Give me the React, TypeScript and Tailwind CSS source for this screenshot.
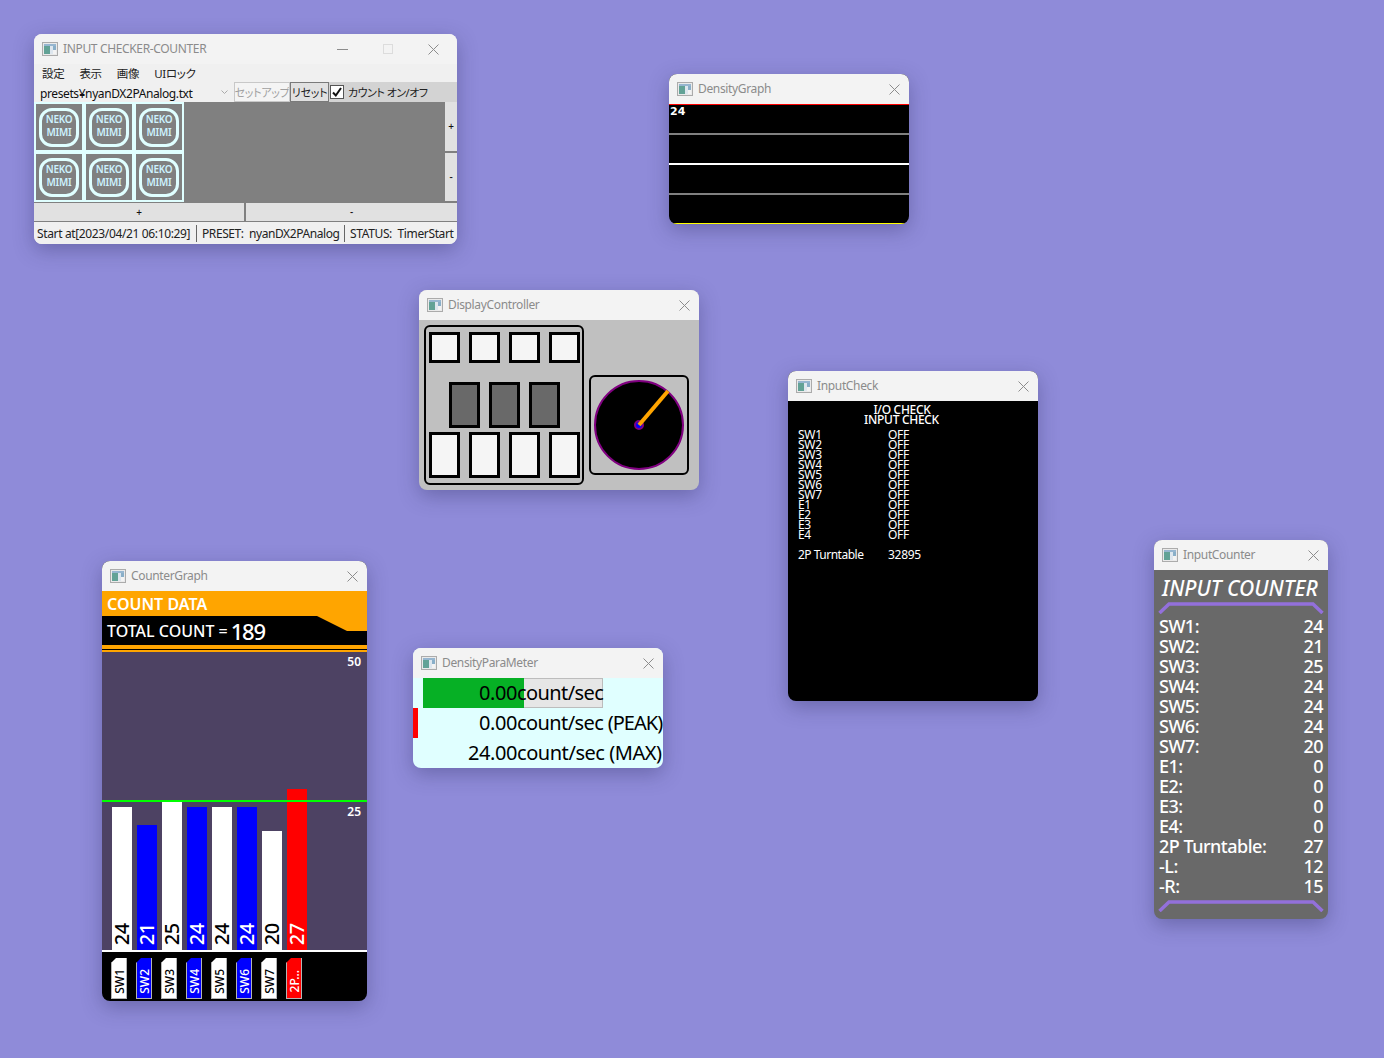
import type { ReactNode } from 'react';

const ui = 'font-["Noto_Sans","Noto_Sans_CJK_JP",sans-serif] tracking-[-0.3px]';

function AppIcon() {
    return (
        <svg width="16" height="14" viewBox="0 0 16 14" className="shrink-0 opacity-80">
            <rect x="0.5" y="0.5" width="15" height="13" fill="#e8e8e8" stroke="#9a9a9a" />
            <rect x="2" y="2" width="12" height="2" fill="#7fa8c8" />
            <rect x="2" y="4" width="6" height="8" fill="#3f8f7f" />
            <rect x="8" y="4" width="3" height="8" fill="#d8e4ee" />
            <rect x="11" y="4" width="3" height="4" fill="#6f9fbf" />
            <rect x="11" y="8" width="3" height="4" fill="#f4f4f4" />
        </svg>
    );
}

function CloseIcon() {
    return (
        <svg width="11" height="11" viewBox="0 0 11 11" className="shrink-0">
            <path d="M0.5 0.5 L10.5 10.5 M10.5 0.5 L0.5 10.5" stroke="#8c8c8c" strokeWidth="1" fill="none" />
        </svg>
    );
}

function TitleBar({ title, full }: { title: string; full?: boolean }) {
    return (
        <div className={`h-[30px] shrink-0 bg-[#f3f3f3] flex items-center pl-2 ${full ? 'pr-[18px]' : 'pr-[9px]'}`}>
            <AppIcon />
            <span className="ml-[5px] text-[12px] tracking-[-0.35px] text-[#8b8b8b] whitespace-nowrap">{title}</span>
            <div className="flex-1" />
            {full && (
                <>
                    <div className="w-[11px] h-px bg-[#8c8c8c] mr-[35px]" />
                    <div className="w-[10px] h-[10px] border border-[#dcdcdc] mr-[35px]" />
                </>
            )}
            <CloseIcon />
        </div>
    );
}

function Win({ className, title, full, children }: { className: string; title: string; full?: boolean; children: ReactNode }) {
    return (
        <div className={`absolute flex flex-col rounded-[8px] overflow-hidden shadow-[0_6px_20px_rgba(40,40,90,0.35)] ${ui} ${className}`}>
            <TitleBar title={title} full={full} />
            {children}
        </div>
    );
}

function Neko() {
    return (
        <div className="w-[46px] h-[46px] bg-[#808080] flex items-center justify-center">
            <div className="w-[40px] h-[39px] rounded-[13px] border-[3px] border-[#e0ffff] flex flex-col items-center justify-center text-[10px] leading-[13px] font-semibold text-[#cdf2ff] pb-[2px]">
                <span>NEKO</span>
                <span>MIMI</span>
            </div>
        </div>
    );
}

function InputCheckerCounter() {
    return (
        <Win className="left-[34px] top-[34px] w-[423px] h-[210px] bg-[#f0f0f0]" title="INPUT CHECKER-COUNTER" full>
            <div className="h-[18px] flex items-center gap-[15px] pl-2 pt-px text-[11.5px] text-[#222] [font-feature-settings:'palt']">
                <span>設定</span>
                <span>表示</span>
                <span>画像</span>
                <span>UIロック</span>
            </div>
            <div className="h-[20px] flex items-stretch bg-[#d3d3d3] text-[12px] leading-none">
                <div className="w-[200px] bg-[#f0f0f0] flex items-center pl-[6px] pr-[6px] overflow-hidden">
                    <span className="flex-1 text-[#111] tracking-[-0.4px] whitespace-nowrap translate-y-[2px]">presets¥nyanDX2PAnalog.txt</span>
                    <svg width="7" height="5" viewBox="0 0 7 5"><path d="M0.5 0.5 L3.5 3.5 L6.5 0.5" stroke="#aaa" fill="none" /></svg>
                </div>
                <div className="w-[56px] bg-[#f4f4f4] border border-[#c8c8c8] text-[11px] text-[#a0a0a0] flex items-center justify-center whitespace-nowrap overflow-hidden [font-feature-settings:'palt']">セットアップ</div>
                <div className="w-[39px] bg-[#e1e1e1] border border-[#7a7a7a] text-[11px] text-[#222] flex items-center justify-center whitespace-nowrap overflow-hidden [font-feature-settings:'palt']">リセット</div>
                <div className="ml-px flex items-center">
                    <div className="w-[14px] h-[14px] bg-white border border-[#555] flex items-center justify-center">
                        <svg width="12" height="12" viewBox="0 0 12 12"><path d="M2 6.5 L4.8 9.5 L10 2" stroke="#111" strokeWidth="2" fill="none" /></svg>
                    </div>
                    <span className="ml-[4px] text-[11px] tracking-[-0.5px] text-[#222] whitespace-nowrap [font-feature-settings:'palt']">カウント オン/オフ</span>
                </div>
            </div>
            <div className="h-[100px] flex bg-[#808080]">
                <div className="w-[150px] bg-[#e0ffff] grid grid-cols-3 gap-x-1 gap-y-1 pl-[2px] pt-[2px] pb-[2px] pr-[2px]">
                    {[0, 1, 2, 3, 4, 5].map((i) => (
                        <Neko key={i} />
                    ))}
                </div>
                <div className="flex-1" />
                <div className="w-[12px] flex flex-col gap-[2px] text-[10px] font-medium text-[#111]">
                    <div className="h-[49px] bg-[#e1e1e1] flex items-center justify-center">+</div>
                    <div className="h-[48px] bg-[#e1e1e1] flex items-center justify-center">-</div>
                </div>
            </div>
            <div className="h-[20px] py-px flex gap-[2px] bg-[#808080] text-[10px] font-medium text-[#111]">
                <div className="w-[210px] bg-[#e1e1e1] flex items-center justify-center">+</div>
                <div className="flex-1 bg-[#e1e1e1] flex items-center justify-center">-</div>
            </div>
            <div className="flex-1 flex items-center bg-[#f0f0f0] pl-[3px] pt-px text-[12px] tracking-[-0.36px] text-[#222] whitespace-nowrap">
                <span className="w-[159px] shrink-0">Start at[2023/04/21 06:10:29]</span>
                <div className="w-px h-[17px] bg-[#666] shrink-0" />
                <span className="w-[147px] shrink-0 pl-[5px] tracking-[-0.42px]">PRESET:&nbsp; nyanDX2PAnalog</span>
                <div className="w-px h-[17px] bg-[#666] shrink-0" />
                <span className="pl-[5px]">STATUS:&nbsp; TimerStart</span>
            </div>
        </Win>
    );
}

function DensityGraph() {
    return (
        <Win className="left-[669px] top-[74px] w-[240px] h-[150px] bg-black" title="DensityGraph">
            <div className="h-px bg-[#ff0000]" />
            <div className="flex-1 flex flex-col">
                <div className="h-[28px] pl-px font-['DejaVu_Sans'] font-bold text-[11px] tracking-normal leading-[13px] text-white">24</div>
                <div className="h-[2px] bg-[#808080]" />
                <div className="h-[28px]" />
                <div className="h-[2px] bg-white" />
                <div className="h-[28px]" />
                <div className="h-[2px] bg-[#808080]" />
                <div className="flex-1" />
                <div className="h-px bg-[#ffff00]" />
            </div>
        </Win>
    );
}

function DisplayController() {
    const sq = 'w-[31px] border-[3px] border-black';
    return (
        <Win className="left-[419px] top-[290px] w-[280px] h-[200px] bg-[#c0c0c0]" title="DisplayController">
            <div className="flex items-end pl-[5px] pt-[5px]">
                <div className="w-[160px] h-[160px] rounded-[6px] border-2 border-black flex flex-col">
                    <div className="flex gap-[9px] pl-[3px] pt-[5px]">
                        {[0, 1, 2, 3].map((i) => (
                            <div key={i} className={`${sq} h-[31px] bg-[#f5f5f5]`} />
                        ))}
                    </div>
                    <div className="flex gap-[9px] pl-[23px] pt-[19px]">
                        {[0, 1, 2].map((i) => (
                            <div key={i} className={`${sq} h-[46px] bg-[#696969]`} />
                        ))}
                    </div>
                    <div className="flex gap-[9px] pl-[3px] pt-[4px]">
                        {[0, 1, 2, 3].map((i) => (
                            <div key={i} className={`${sq} h-[46px] bg-[#f5f5f5]`} />
                        ))}
                    </div>
                </div>
                <div className="ml-[5px] mb-[10px] w-[100px] h-[100px] rounded-[6px] border-2 border-black flex items-center justify-center">
                    <svg width="90" height="90" viewBox="0 0 90 90">
                        <circle cx="45" cy="45" r="44" fill="#000" stroke="#800080" strokeWidth="2" />
                        <circle cx="45" cy="45" r="4" fill="#0000ff" stroke="#800080" strokeWidth="2" />
                        <line x1="45" y1="45" x2="74" y2="11" stroke="#ffa500" strokeWidth="4" />
                    </svg>
                </div>
            </div>
        </Win>
    );
}

const checkRows = ['SW1', 'SW2', 'SW3', 'SW4', 'SW5', 'SW6', 'SW7', 'E1', 'E2', 'E3', 'E4'];

function InputCheck() {
    return (
        <Win className="left-[788px] top-[371px] w-[250px] h-[330px] bg-black" title="InputCheck">
            <div className="pt-[4px] text-white text-[12px] leading-[10px]">
                <div className="w-[228px] text-center font-medium">I/O CHECK</div>
                <div className="w-[227px] text-center font-medium">INPUT CHECK</div>
                <div className="mt-[5px] pl-[10px]">
                    {checkRows.map((r) => (
                        <div key={r} className="flex h-[10px]">
                            <span className="w-[90px]">{r}</span>
                            <span>OFF</span>
                        </div>
                    ))}
                    <div className="flex h-[10px] mt-[10px]">
                        <span className="w-[90px] tracking-[-0.5px] whitespace-nowrap">2P Turntable</span>
                        <span>32895</span>
                    </div>
                </div>
            </div>
        </Win>
    );
}

const bars = [
    { name: 'SW1', v: 24, h: 143, bg: 'bg-white', fg: 'text-black' },
    { name: 'SW2', v: 21, h: 125, bg: 'bg-[#0000ff]', fg: 'text-white' },
    { name: 'SW3', v: 25, h: 148, bg: 'bg-white', fg: 'text-black' },
    { name: 'SW4', v: 24, h: 143, bg: 'bg-[#0000ff]', fg: 'text-white' },
    { name: 'SW5', v: 24, h: 143, bg: 'bg-white', fg: 'text-black' },
    { name: 'SW6', v: 24, h: 143, bg: 'bg-[#0000ff]', fg: 'text-white' },
    { name: 'SW7', v: 20, h: 119, bg: 'bg-white', fg: 'text-black' },
    { name: '2P...', v: 27, h: 161, bg: 'bg-[#ff0000]', fg: 'text-white' },
];

function CounterGraph() {
    return (
        <Win className="left-[102px] top-[561px] w-[265px] h-[440px] bg-black" title="CounterGraph">
            <div className="h-[25px] bg-[#ffa500] pl-[5px] flex items-center text-[16px] tracking-normal font-semibold text-white">COUNT DATA</div>
            <div className="relative h-[29px] bg-black flex items-center pl-[5px] text-white">
                <svg width="50" height="15" viewBox="0 0 50 15" className="absolute right-0 top-0">
                    <path d="M0 0 L50 0 L50 15 L30 15 Z" fill="#ffa500" />
                </svg>
                <span className="text-[16px] tracking-normal font-medium">TOTAL COUNT =</span>
                <span className="ml-[3px] text-[22px] tracking-[-1.2px] font-medium leading-none">189</span>
            </div>
            <div className="h-[4px] bg-[#ffa500]" />
            <div className="h-px bg-black" />
            <div className="h-[2px] bg-[#ffa500]" />
            <div className="relative h-[298px] bg-[#4d4263] flex items-end gap-[5px] pl-[10px]">
                <span className="absolute right-[6px] top-[1px] text-[12px] tracking-normal font-semibold text-white">50</span>
                <span className="absolute right-[6px] top-[151px] text-[12px] tracking-normal font-semibold text-white">25</span>
                {bars.map((b) => (
                    <div key={b.name} className={`w-[20px] flex flex-col justify-end items-center ${b.bg}`} style={{ height: b.h }}>
                        <span className={`[writing-mode:vertical-rl] rotate-180 text-[20px] font-medium leading-[20px] pt-[5px] ${b.fg}`}>{b.v}</span>
                    </div>
                ))}
                <div className="absolute left-0 right-0 top-[148px] h-[2px] bg-[#00ff00]" />
            </div>
            <div className="h-[2px] bg-white" />
            <div className="flex-1 flex gap-[9px] pl-[9px] pt-[6px]">
                {bars.map((b) => (
                    <div key={b.name} className={`w-[16px] h-[41px] pl-px pt-[6px] flex items-center justify-center border-r border-b border-l border-[#b4b4b4] [clip-path:polygon(5px_0,100%_0,100%_100%,0_100%,0_5px)] ${b.bg}`}>
                        <span className={`[writing-mode:vertical-rl] rotate-180 text-[12px] font-medium tracking-normal leading-[14px] whitespace-nowrap ${b.fg}`}>{b.name}</span>
                    </div>
                ))}
            </div>
        </Win>
    );
}

function DensityParaMeter() {
    return (
        <Win className="left-[413px] top-[648px] w-[250px] h-[120px] bg-[#e0ffff]" title="DensityParaMeter">
            <div className="text-[20px] tracking-[-0.4px] leading-[30px] text-black">
                <div className="relative h-[30px] ml-[10px] w-[180px] flex">
                    <div className="w-[101px] bg-[#06b025]" />
                    <div className="flex-1 bg-[#e6e6e6] border-y border-r border-[#bcbcbc]" />
                    <div className="absolute inset-0 flex">
                        <span className="w-[94px] shrink-0 text-right">0.00</span>
                        <span className="shrink-0 tracking-[-0.6px]">count/sec</span>
                    </div>
                </div>
                <div className="h-[30px] flex whitespace-nowrap overflow-hidden">
                    <div className="w-[5px] h-[30px] bg-[#ff0000] shrink-0" />
                    <span className="w-[99px] shrink-0 text-right">0.00</span>
                    <span className="shrink-0 tracking-[-0.6px]">count/sec <span className="tracking-[-1px]">(PEAK)</span></span>
                </div>
                <div className="h-[30px] flex whitespace-nowrap overflow-hidden">
                    <span className="w-[104px] shrink-0 text-right">24.00</span>
                    <span className="shrink-0 tracking-[-0.45px]">count/sec (MAX)</span>
                </div>
            </div>
        </Win>
    );
}

const counts: [string, number][] = [
    ['SW1:', 24], ['SW2:', 21], ['SW3:', 25], ['SW4:', 24], ['SW5:', 24], ['SW6:', 24], ['SW7:', 20],
    ['E1:', 0], ['E2:', 0], ['E3:', 0], ['E4:', 0], ['2P Turntable:', 27], ['-L:', 12], ['-R:', 15],
];

function Bracket() {
    return (
        <svg width="166" height="12" viewBox="0 0 166 12" className="block ml-[4px]">
            <path d="M1.5 11 L11 2 L155 2 L164.5 11" stroke="#9370db" strokeWidth="3.5" fill="none" />
        </svg>
    );
}

function InputCounter() {
    return (
        <Win className="left-[1154px] top-[540px] w-[174px] h-[379px] bg-[#696969]" title="InputCounter">
            <div className="h-[32px] pl-[8px] pt-[6px] flex items-center text-[21px] tracking-normal italic font-medium text-white whitespace-nowrap">INPUT COUNTER</div>
            <Bracket />
            <div className="mt-[2px] px-[5px] text-[18px] tracking-[-0.5px] leading-[20px] font-medium text-white">
                {counts.map(([k, v]) => (
                    <div key={k} className="flex justify-between">
                        <span>{k}</span>
                        <span>{v}</span>
                    </div>
                ))}
            </div>
            <div className="mt-[4px]">
                <Bracket />
            </div>
        </Win>
    );
}

export default function App() {
    return (
        <div className="relative w-[1384px] h-[1058px] overflow-hidden bg-[#8f8bd9]">
            <InputCheckerCounter />
            <DensityGraph />
            <DisplayController />
            <InputCheck />
            <CounterGraph />
            <DensityParaMeter />
            <InputCounter />
        </div>
    );
}
